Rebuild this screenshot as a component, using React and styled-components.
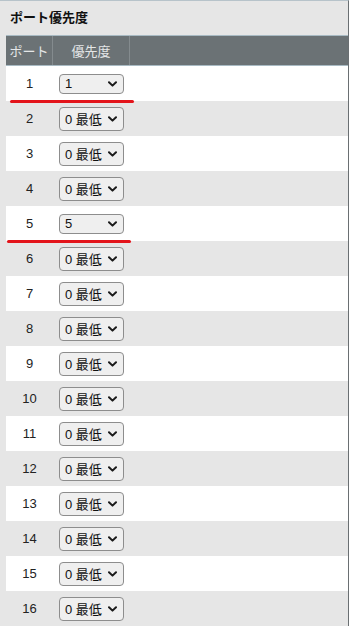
import React from "react";
import styled, { createGlobalStyle } from "styled-components";

const font = `"Liberation Sans", "Noto Sans CJK JP", sans-serif`;

const GlobalStyle = createGlobalStyle`
  body {
    margin: 0;
    background: #ffffff;
    font-family: ${font};
  }
`;

const ports = Array.from({ length: 16 }, (_, i) => ({
  port: i + 1,
  value: i === 0 ? "1" : i === 4 ? "5" : "0 最低",
  marked: i === 0 || i === 4
}));

const Chevron = () => (
  <svg width="9" height="6" viewBox="0 0 9 6">
    <path
      d="M1 1.2 L4.5 4.6 L8 1.2"
      fill="none"
      stroke="#1a1a1a"
      strokeWidth="2"
      strokeLinecap="round"
      strokeLinejoin="round"
    />
  </svg>
);

export default function App() {
  return (
    <>
      <GlobalStyle />
      <Panel>
        <Title>ポート優先度</Title>
        <Table>
          <HeadRow>
            <HeadCell>ポート</HeadCell>
            <HeadCell>優先度</HeadCell>
            <HeadCell last />
          </HeadRow>
          {ports.map((p, i) => (
            <Row key={p.port} odd={i % 2 === 1}>
              <PortCell>{p.port}</PortCell>
              <SelectCell>
                <Select tall={!p.marked}>
                  <span>{p.value}</span>
                  <Chevron />
                </Select>
              </SelectCell>
              <div />
              {p.marked && <Mark shift={i === 0 ? 4 : 1} />}
            </Row>
          ))}
        </Table>
      </Panel>
    </>
  );
}

const Panel = styled.div`
  background: #e6e6e6;
  border-top: 1px solid #b7c3ca;
  border-right: 1px solid #6a6f72;
  padding-left: 6px;
  height: 625px;
  overflow: hidden;
`;

const Title = styled.div`
  height: 34px;
  line-height: 34px;
  padding-left: 4px;
  font-size: 13px;
  font-weight: bold;
  color: #111;
`;

const Table = styled.div`
  display: flex;
  flex-direction: column;
`;

const HeadRow = styled.div`
  display: grid;
  grid-template-columns: 47px 77px 1fr;
  height: 29px;
  background: #6b7275;
  border-top: 1px solid #a8bac3;
  border-bottom: 1px solid #a8bac3;
`;

const HeadCell = styled.div`
  display: flex;
  align-items: center;
  justify-content: center;
  font-size: 13px;
  color: #e4e6e7;
  border-right: ${p => (p.last ? "none" : "1px solid #848b8e")};
`;

const Row = styled.div`
  position: relative;
  display: grid;
  grid-template-columns: 47px 77px 1fr;
  height: 35px;
  background: ${p => (p.odd ? "#e6e6e6" : "#ffffff")};
`;

const PortCell = styled.div`
  display: flex;
  align-items: center;
  justify-content: center;
  font-size: 13px;
  color: #222;
`;

const SelectCell = styled.div`
  display: flex;
  align-items: center;
  padding-left: 6px;
`;

const Select = styled.div`
  box-sizing: border-box;
  width: 65px;
  height: ${p => (p.tall ? "24px" : "20px")};
  display: flex;
  align-items: center;
  justify-content: space-between;
  padding: 0 6px 0 5px;
  border: 1px solid #8d8d8d;
  border-radius: 4px;
  background: #efefef;
  font-size: 13px;
  color: #111;
`;

const Mark = styled.div`
  position: absolute;
  z-index: 1;
  left: ${p => p.shift}px;
  bottom: -2px;
  width: 124px;
  height: 3px;
  border-radius: 2px;
  background: #e3141b;
`;
